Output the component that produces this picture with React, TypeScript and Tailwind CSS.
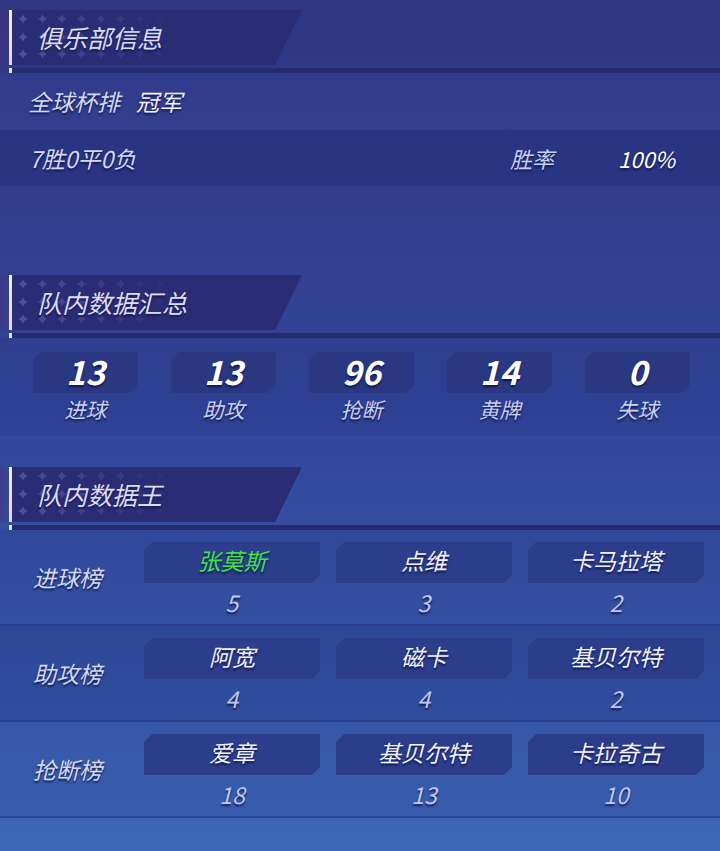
import React from "react";

const font = { fontFamily: '"Noto Sans CJK SC", "Noto Sans", sans-serif' };

function Star({ x, y, o }: { x: number; y: number; o: number }) {
  return (
    <path
      d={`M${x} ${y - 5} Q${x + 1} ${y - 1} ${x + 5} ${y} Q${x + 1} ${y + 1} ${x} ${y + 5} Q${x - 1} ${y + 1} ${x - 5} ${y} Q${x - 1} ${y - 1} ${x} ${y - 5}Z`}
      fill="#7f84d0"
      opacity={o}
    />
  );
}

function Header({ title }: { title: string }) {
  const stars: { x: number; y: number; o: number }[] = [];
  const rows = [9, 27, 44];
  for (let r = 0; r < 3; r++) {
    for (let c = 0; c < 8; c++) {
      stars.push({ x: 11 + c * 19.5, y: rows[r], o: Math.max(0, 0.4 - c * 0.05) });
    }
  }
  return (
    <div className="relative h-[63px] w-full">
      <div className="flex h-[55px]">
        <div className="w-[12px] h-full flex justify-end bg-gradient-to-r from-[#4a2f7a]/50 to-transparent">
          <div className="w-[3px] h-full bg-gradient-to-b from-[#f4f0ff] to-[#e6d2f2]" />
        </div>
        <div className="relative w-[290px] h-full bg-[#2a2d74] [clip-path:polygon(0_0,100%_0,263px_100%,0_100%)]">
          <svg className="absolute left-0 top-0" width="180" height="55">
            {stars.map((s, i) => (
              <Star key={i} {...s} />
            ))}
          </svg>
          <div
            className="absolute left-[25px] top-0 h-full flex items-center text-[25px] italic text-[#dcdcf4] [text-shadow:0_2px_2px_rgba(15,18,70,0.7)]"
            style={font}
          >
            {title}
          </div>
        </div>
      </div>
      <div className="flex h-[5px] mt-[3px]">
        <div className="w-[12px] flex justify-end">
          <div className="w-[3px] h-full bg-[#e8e2f8]" />
        </div>
        <div className="flex-1 h-full bg-[#262b6c]" />
      </div>
    </div>
  );
}

const sh = "[text-shadow:0_2px_2px_rgba(12,20,70,0.85)]";

function StatBox({ value, label }: { value: string; label: string }) {
  return (
    <div className="flex flex-col items-center">
      <div className="w-[105px] h-[41px] bg-[#2a3882] flex items-center justify-center [clip-path:polygon(8px_0,100%_0,100%_calc(100%-8px),calc(100%-8px)_100%,0_100%,0_8px)]">
        <span className={`-mt-[3px] text-[33px] font-bold italic text-white leading-none ${sh}`} style={font}>
          {value}
        </span>
      </div>
      <div className={`mt-[2px] text-[21px] italic text-[#c9d0f0] leading-[28px] ${sh}`} style={font}>
        {label}
      </div>
    </div>
  );
}

type Entry = { name: string; value: string; green?: boolean };

function KingRow({ label, entries, dark }: { label: string; entries: Entry[]; dark?: boolean }) {
  return (
    <div className={`flex h-[96px] ${dark ? "bg-[#14206a]/25" : "bg-[#14206a]/10"} border-b-2 border-[#1c2870]/40`}>
      <div className="w-[144px] flex items-center pl-[33px]">
        <span className={`text-[23px] italic text-[#d3d9f3] ${sh}`} style={font}>
          {label}
        </span>
      </div>
      <div className="flex gap-[16px] pt-[12px]">
        {entries.map((e, i) => (
          <div key={i} className="flex flex-col items-center w-[176px]">
            <div className="w-[176px] h-[41px] bg-[#2b3d8b] flex items-center justify-center [clip-path:polygon(8px_0,100%_0,100%_calc(100%-8px),calc(100%-8px)_100%,0_100%,0_8px)]">
              <span
                className={`-mt-[4px] text-[23px] italic leading-none ${e.green ? "text-[#3ee64c]" : "text-[#f2f2ff]"} ${sh}`}
                style={font}
              >
                {e.name}
              </span>
            </div>
            <div className={`mt-[5px] text-[23px] italic text-[#bfc8ee] leading-[28px] ${sh}`} style={font}>
              {e.value}
            </div>
          </div>
        ))}
      </div>
    </div>
  );
}

export default function App() {
  return (
    <div
      className="w-[720px] h-[851px] overflow-hidden bg-gradient-to-b from-[#2f3683] via-[#32469a] to-[#3e68b8] pt-[10px]"
      style={font}
    >
      <Header title="俱乐部信息" />
      <div className="h-[57px] flex items-center pl-[28px] bg-[#3a4aa0]/20">
        <span className={`text-[23px] italic text-[#d3d8f2] ${sh}`}>全球杯排</span>
        <span className={`ml-[16px] text-[23px] italic text-[#eef0ff] ${sh}`}>冠军</span>
      </div>
      <div className="h-[56px] flex items-center pl-[29px] bg-[#1a2470]/30">
        <span className={`text-[23px] italic text-[#d3d8f2] ${sh}`}>7胜0平0负</span>
        <span className={`ml-auto text-[22px] italic text-[#c8cff0] ${sh}`}>胜率</span>
        <span className={`ml-[64px] mr-[45px] text-[22px] italic text-white ${sh}`}>100%</span>
      </div>
      <div className="h-[89px]" />
      <Header title="队内数据汇总" />
      <div className="h-[98px] bg-[#14206a]/10 pt-[14px] pl-[33px] flex gap-[33px]">
        <StatBox value="13" label="进球" />
        <StatBox value="13" label="助攻" />
        <StatBox value="96" label="抢断" />
        <StatBox value="14" label="黄牌" />
        <StatBox value="0" label="失球" />
      </div>
      <div className="h-[31px]" />
      <Header title="队内数据王" />
      <KingRow
        label="进球榜"
        entries={[
          { name: "张莫斯", value: "5", green: true },
          { name: "点维", value: "3" },
          { name: "卡马拉塔", value: "2" },
        ]}
      />
      <KingRow
        label="助攻榜"
        dark
        entries={[
          { name: "阿宽", value: "4" },
          { name: "磁卡", value: "4" },
          { name: "基贝尔特", value: "2" },
        ]}
      />
      <KingRow
        label="抢断榜"
        entries={[
          { name: "爱章", value: "18" },
          { name: "基贝尔特", value: "13" },
          { name: "卡拉奇古", value: "10" },
        ]}
      />
    </div>
  );
}
